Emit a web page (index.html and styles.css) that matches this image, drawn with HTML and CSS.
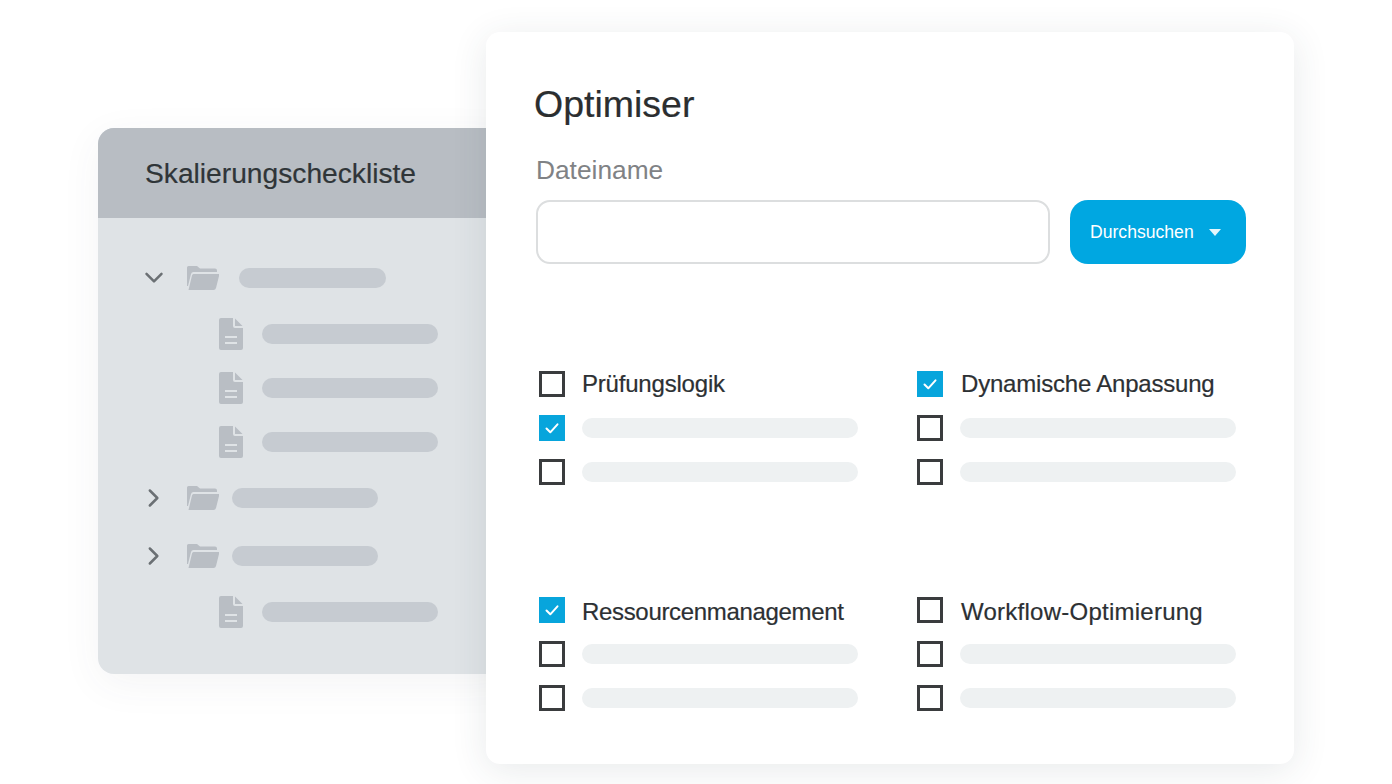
FILE: index.html
```html
<!DOCTYPE html>
<html lang="de">
<head>
<meta charset="utf-8">
<title>Optimiser</title>
<link rel="stylesheet" href="styles.css">
</head>
<body>
<svg class="defs" width="0" height="0" aria-hidden="true">
  <defs>
    <symbol id="folder" viewBox="0 0 32 24">
      <path fill="#b9bec4" d="M0 1.500Q0 0 1.500 0H10l3 2.500h15q2 0 2 2V6H6.500Q4.500 6 4 8L1 20H0z"/>
      <path fill="#b9bec4" d="M6.500 8H31.500q1 0 .7 1.200L29 22q-.5 2-2.500 2H1.500L5 9.500Q5.300 8 6.500 8z"/>
    </symbol>
    <symbol id="file" viewBox="0 0 24 32">
      <path fill="#b9bec4" d="M2 0H14V8q0 2 2 2h8V30q0 2-2 2H2q-2 0-2-2V2Q0 0 2 0z"/>
      <path fill="#b9bec4" d="M16 .5 23.500 8H16z"/>
      <path stroke="#dfe3e6" stroke-width="2" d="M6 19H18M6 25H18"/>
    </symbol>
    <symbol id="check" viewBox="0 0 26 26">
      <path fill="none" stroke="#fff" stroke-width="2" stroke-linecap="round" stroke-linejoin="round" d="M7.500 13.500l3.800 3.800 7.200-8"/>
    </symbol>
  </defs>
</svg>

<section class="tree-window">
  <header class="tree-head"><h2 class="tree-title">Skalierungscheckliste</h2></header>
  <div class="tree-body">
    <div class="row row-first">
      <svg class="chevron" viewBox="0 0 24 24"><path d="M3 7l9 9 9-9"/></svg>
      <svg class="folder"><use href="#folder"/></svg>
      <span class="pill pill-tree pill-open"></span>
    </div>
    <div class="row row-file"><svg class="file"><use href="#file"/></svg><span class="pill pill-tree pill-file"></span></div>
    <div class="row row-file"><svg class="file"><use href="#file"/></svg><span class="pill pill-tree pill-file"></span></div>
    <div class="row row-file"><svg class="file"><use href="#file"/></svg><span class="pill pill-tree pill-file"></span></div>
    <div class="row row-folder">
      <svg class="chevron chevron-right" viewBox="0 0 24 24"><path d="M7 3l9 9-9 9"/></svg>
      <svg class="folder"><use href="#folder"/></svg>
      <span class="pill pill-tree pill-closed"></span>
    </div>
    <div class="row row-folder row-low">
      <svg class="chevron chevron-right" viewBox="0 0 24 24"><path d="M7 3l9 9-9 9"/></svg>
      <svg class="folder"><use href="#folder"/></svg>
      <span class="pill pill-tree pill-closed"></span>
    </div>
    <div class="row row-file row-last"><svg class="file"><use href="#file"/></svg><span class="pill pill-tree pill-file"></span></div>
  </div>
</section>

<main class="card">
  <h1 class="card-title">Optimiser</h1>
  <label class="field-label">Dateiname</label>
  <div class="field-row">
    <div class="input"></div>
    <button class="browse" type="button">Durchsuchen<span class="caret"></span></button>
  </div>
  <div class="groups">
    <div class="group">
      <div class="item"><span class="box"></span><span class="label">Prüfungslogik</span></div>
      <div class="item"><span class="box on"><svg class="tick"><use href="#check"/></svg></span><span class="pill pill-item"></span></div>
      <div class="item"><span class="box"></span><span class="pill pill-item"></span></div>
    </div>
    <div class="group">
      <div class="item"><span class="box on"><svg class="tick"><use href="#check"/></svg></span><span class="label">Dynamische Anpassung</span></div>
      <div class="item"><span class="box"></span><span class="pill pill-item"></span></div>
      <div class="item"><span class="box"></span><span class="pill pill-item"></span></div>
    </div>
    <div class="group">
      <div class="item"><span class="box on"><svg class="tick"><use href="#check"/></svg></span><span class="label label-low">Ressourcenmanagement</span></div>
      <div class="item"><span class="box"></span><span class="pill pill-item"></span></div>
      <div class="item"><span class="box"></span><span class="pill pill-item"></span></div>
    </div>
    <div class="group">
      <div class="item"><span class="box"></span><span class="label label-low label-wide">Workflow-Optimierung</span></div>
      <div class="item"><span class="box"></span><span class="pill pill-item"></span></div>
      <div class="item"><span class="box"></span><span class="pill pill-item"></span></div>
    </div>
  </div>
</main>
</body>
</html>
```

FILE: styles.css
```css
* { box-sizing: border-box; }
html, body { margin: 0; height: 100%; }
body {
  position: relative;
  width: 1392px;
  height: 784px;
  overflow: hidden;
  background: #fff;
  font-family: "Liberation Sans", Arial, sans-serif;
}
.defs { position: absolute; }

/* Back window */
.tree-window {
  position: absolute;
  left: 98px;
  top: 128px;
  width: 420px;
  height: 546px;
  border-radius: 16px;
  overflow: hidden;
  background: #dfe3e6;
  box-shadow: 0 10px 40px rgba(60, 70, 80, .06);
}
.tree-head {
  height: 90px;
  padding: 0 47px;
  display: flex;
  align-items: center;
  background: #b8bdc3;
}
.tree-title {
  margin: 0;
  font-size: 28.200px;
  font-weight: 400;
  color: #2f3538;
  -webkit-text-stroke: .2px #2f3538;
}
.tree-body {
  display: flex;
  flex-direction: column;
  padding: 50px 0 0 46px;
}
.row { display: flex; align-items: center; height: 20px; }
.row-file { padding-left: 75px; margin-top: 34px; }
.row-first + .row-file { margin-top: 36px; }
.row-folder { margin-top: 36px; }
.row-low { margin-top: 38px; }
.row-last { margin-top: 36px; }
.chevron {
  width: 20px;
  height: 20px;
  fill: none;
  stroke: #6b7074;
  stroke-width: 3;
  stroke-linecap: round;
  stroke-linejoin: round;
}
.folder { width: 32px; height: 24px; margin-left: 23px; flex: none; }
.file { width: 24px; height: 32px; flex: none; }
.pill { display: block; height: 20px; border-radius: 10px; }
.pill-tree { background: #c6cbd1; filter: blur(.5px); }
.pill-open { width: 147px; margin-left: 20px; }
.pill-closed { width: 146px; margin-left: 13px; }
.pill-file { width: 176px; margin-left: 19px; }

/* Front window */
.card {
  position: absolute;
  left: 486px;
  top: 32px;
  width: 808px;
  height: 732px;
  padding: 50px 48px 0 50px;
  border-radius: 14px;
  background: #fff;
  box-shadow: 0 6px 36px rgba(50, 60, 70, .11);
}
.card-title {
  margin: 0 0 0 -2px;
  font-size: 37.500px;
  line-height: 44px;
  font-weight: 400;
  color: #2b2e30;
  -webkit-text-stroke: .2px #2b2e30;
}
.field-label {
  display: block;
  margin-top: 29px;
  font-size: 26.300px;
  line-height: 30px;
  color: #808285;
}
.field-row { display: flex; gap: 20px; margin-top: 15px; }
.input {
  width: 514px;
  height: 64px;
  border: 2px solid #dcdedf;
  border-radius: 14px;
  background: #fff;
}
.browse {
  display: flex;
  align-items: center;
  justify-content: space-between;
  width: 176px;
  height: 64px;
  padding: 0 25px 0 20px;
  border: 0;
  border-radius: 18px;
  background: #00a7e1;
  color: #fff;
  font: 400 17.600px "Liberation Sans", Arial, sans-serif;
}
.caret {
  width: 0;
  height: 0;
  border-left: 6.500px solid transparent;
  border-right: 6.500px solid transparent;
  border-top: 7px solid #e4f6fc;
}
.groups {
  display: grid;
  grid-template-columns: 378px 320px;
  row-gap: 112px;
  margin-top: 107px;
  margin-left: 3px;
}
.group { display: flex; flex-direction: column; gap: 18px; }
.group:nth-child(even) .label { margin-left: 18px; }
.item { display: flex; align-items: center; height: 26px; }
.box {
  flex: none;
  width: 26px;
  height: 26px;
  border: 3px solid #3a3c3e;
  background: #fff;
}
.box.on { border: 0; background: #07a5dc; }
.tick { display: block; width: 26px; height: 26px; }
.label {
  margin-left: 17px;
  font-size: 24px;
  letter-spacing: -.2px;
  color: #2c3033;
  white-space: nowrap;
  -webkit-text-stroke: .2px #2c3033;
}
.label-low { padding-top: 4px; letter-spacing: -.33px; }
.label-wide { letter-spacing: .25px; }
.pill-item {
  width: 276px;
  height: 20px;
  margin-left: 17px;
  background: #eef1f2;
  filter: blur(.5px);
}
```
